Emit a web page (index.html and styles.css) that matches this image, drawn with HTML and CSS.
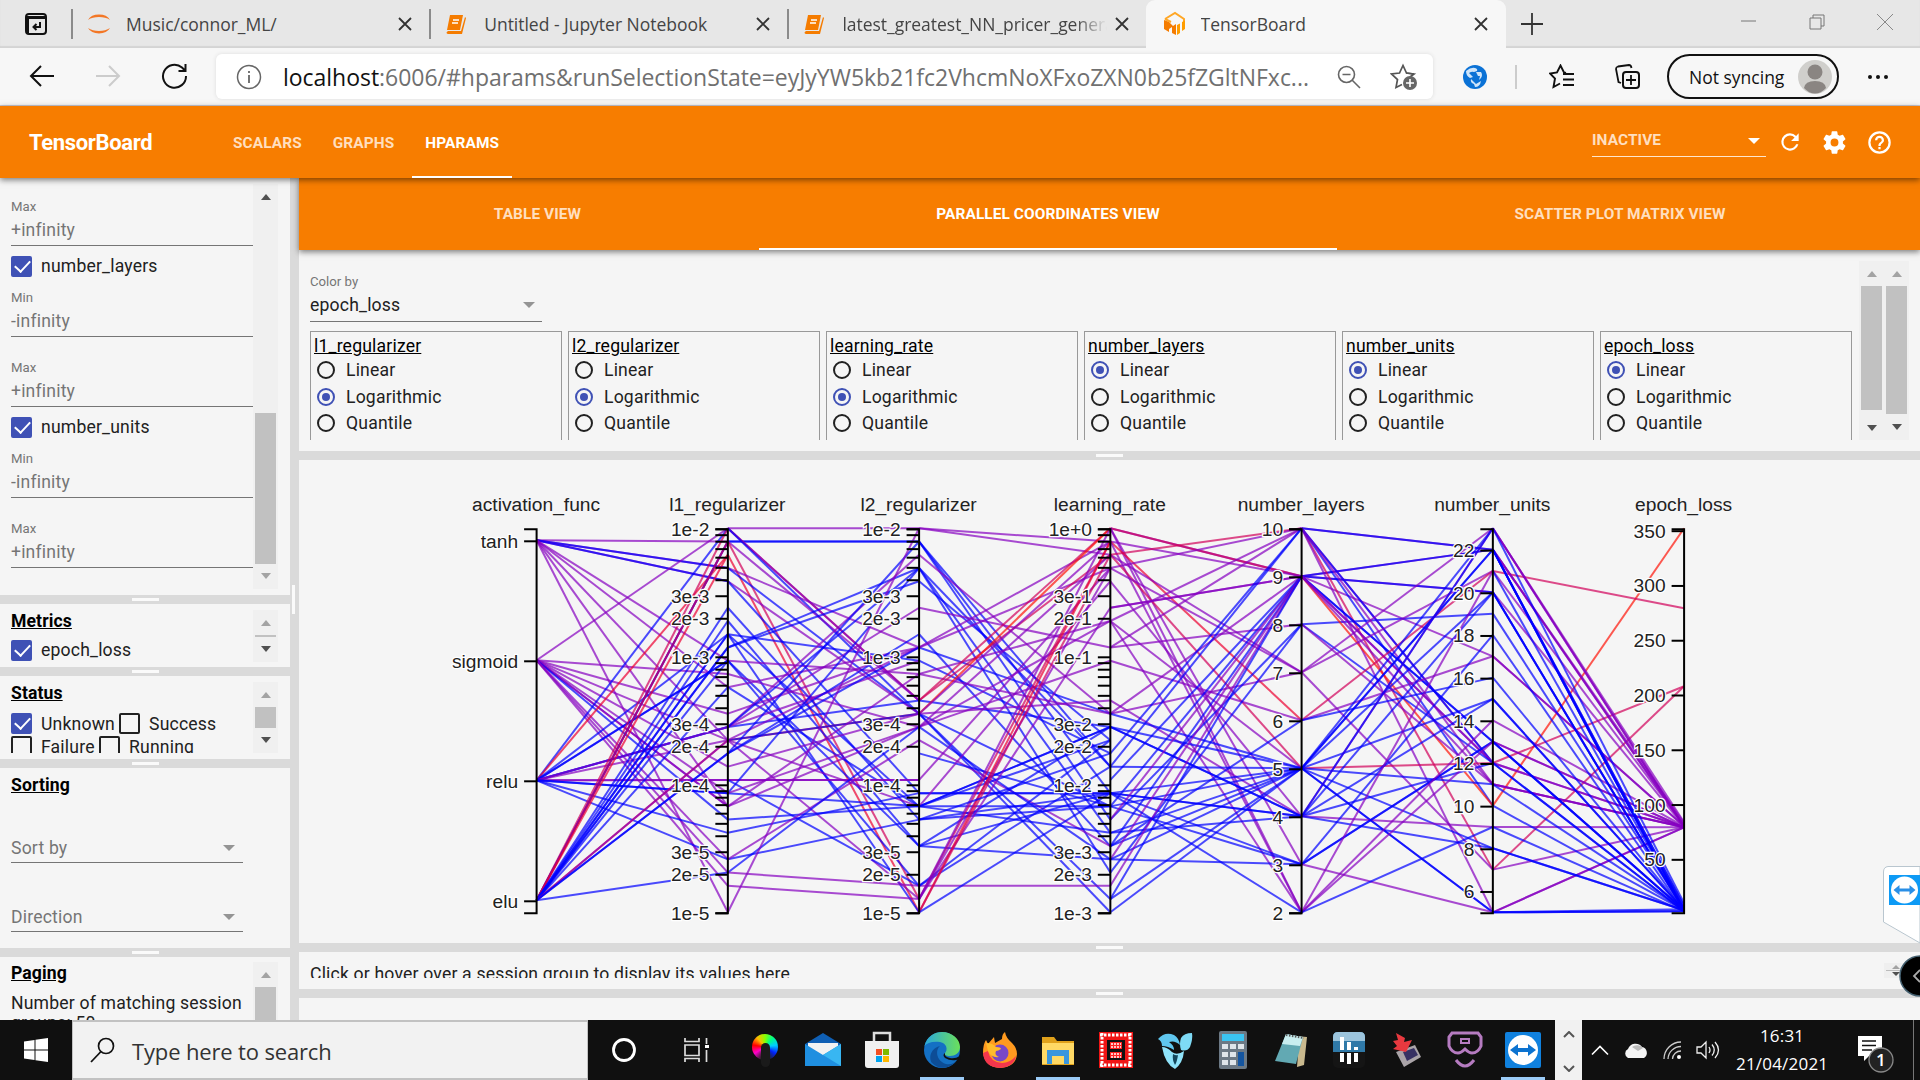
FILE: index.html
```html
<!DOCTYPE html>
<html lang="en">
<head>
<meta charset="utf-8">
<title>TensorBoard</title>
<link rel="stylesheet" href="styles.css">
</head>
<body>
<div class="tabstrip">
  <div class="tab-actions"><svg width="24" height="24" viewBox="0 0 24 24"><rect x="2" y="2" width="20" height="20" rx="3" fill="none" stroke="#111" stroke-width="2"/><path d="M2 4h20v3H2zM2 4h3v18H3z" fill="#111"/><path d="M16 10v5h-6m2.500-3l-3 3 3 3" fill="none" stroke="#111" stroke-width="2"/></svg></div>
  <div class="tab"><svg class="fav" width="26" height="26" viewBox="0 0 26 26"><path d="M2 9a12 9 0 0 1 22 0a15 9 0 0 0-22 0zM2 17a12 9 0 0 0 22 0a15 9 0 0 1-22 0z" fill="#f37726"/></svg><span class="t-name t1">Music/connor_ML/</span><svg class="x" width="14" height="14" viewBox="0 0 14 14"><path d="M1 1l12 12M13 1L1 13"/></svg></div>
  <div class="tab"><svg class="fav" width="26" height="26" viewBox="0 0 26 26"><path d="M6 4h13l-3 15H3zM4 20h13l4-14 1 1-4 16H4q-3-1 0-3z" fill="#f57c00"/><path d="M9 9h6M8 12h6" stroke="#fff" stroke-width="1.500"/></svg><span class="t-name t2">Untitled - Jupyter Notebook</span><svg class="x" width="14" height="14" viewBox="0 0 14 14"><path d="M1 1l12 12M13 1L1 13"/></svg></div>
  <div class="tab"><svg class="fav" width="26" height="26" viewBox="0 0 26 26"><path d="M6 4h13l-3 15H3zM4 20h13l4-14 1 1-4 16H4q-3-1 0-3z" fill="#f57c00"/><path d="M9 9h6M8 12h6" stroke="#fff" stroke-width="1.500"/></svg><span class="t-name fade t3">latest_greatest_NN_pricer_generator</span><svg class="x" width="14" height="14" viewBox="0 0 14 14"><path d="M1 1l12 12M13 1L1 13"/></svg></div>
  <div class="tab active"><svg class="fav" width="26" height="26" viewBox="0 0 26 26"><path d="M4 8L14 2l9 6v3M4 8l6 3" fill="none" stroke="#ffa726" stroke-width="2"/><path d="M3 9l5 2 4 4 3-2v11l-4-2v-6l-3 2v3l-5-3z" fill="#f57c00"/><path d="M16 14l3-1.500v9.500L16 24zM21 11l3-1.500V18l-3 2z" fill="#ff9d00"/></svg><span class="t-name t4">TensorBoard</span><svg class="x" width="14" height="14" viewBox="0 0 14 14"><path d="M1 1l12 12M13 1L1 13"/></svg></div>
  <svg class="plus" width="22" height="22" viewBox="0 0 22 22"><path d="M11 0v22M0 11h22" stroke="#333" stroke-width="1.800"/></svg>
  <div class="win"><svg width="15" height="16"><path d="M0 7h15" stroke="#777"/></svg><svg width="16" height="16" viewBox="0 0 16 16"><path d="M1 4h11v11H1zM4 4V1h11v11h-3" fill="none" stroke="#777"/></svg><svg width="16" height="16" viewBox="0 0 16 16"><path d="M0 0l16 16M16 0L0 16" stroke="#888"/></svg></div>
</div>
<div class="toolbar">
  <svg class="nav back" width="26" height="24" viewBox="0 0 26 24"><path d="M25 12H2M12 2L2 12l10 10" fill="none" stroke="#111" stroke-width="2"/></svg>
  <svg class="nav fwd" width="26" height="24" viewBox="0 0 26 24"><path d="M1 12h23M14 2l10 10-10 10" fill="none" stroke="#ccc" stroke-width="2"/></svg>
  <svg class="nav rel" width="28" height="28" viewBox="0 0 28 28"><path d="M25 14A11.500 11.500 0 1 1 21 5.500L24.500 9M24.500 2v7h-7" fill="none" stroke="#111" stroke-width="2"/></svg>
  <div class="address">
    <svg width="26" height="26" viewBox="0 0 26 26"><circle cx="13" cy="13" r="11.500" fill="none" stroke="#666" stroke-width="1.500"/><path d="M13 11v8M13 7v2" stroke="#666" stroke-width="1.800"/></svg>
    <div class="url"><b>localhost</b>:6006/#hparams&amp;runSelectionState=eyJyYW5kb21fc2VhcmNoXFxoZXN0b25fZGltNFxc...</div>
    <svg class="mag" width="24" height="24" viewBox="0 0 24 24"><circle cx="9.500" cy="9.500" r="8" fill="none" stroke="#666" stroke-width="1.600"/><path d="M15 15l8 8M5.500 9.500h8" stroke="#666" stroke-width="1.600"/></svg>
    <svg width="28" height="28" viewBox="0 0 28 28"><path d="M24 11l-7.500-1L13 2.500 9.500 10 1.500 11l6 5.500-1.500 8 6-3" fill="none" stroke="#555" stroke-width="1.700"/><path d="M16 10l8 1-4 3" fill="none" stroke="#555" stroke-width="1.700"/><circle cx="20" cy="20" r="7" fill="#666"/><path d="M20 16v8M16 20h8" stroke="#fff" stroke-width="1.600"/></svg>
  </div>
  <svg class="globe" width="26" height="26" viewBox="0 0 26 26"><circle cx="13" cy="13" r="12" fill="#0b72d6"/><path d="M4 7q5-4 9-3 3 1 2 3l-3 1q-2-1-5 1l4 4-3 1q-4-2-4-7zM14 8l5 0q2 3 0 6l-2 2 1-4-2 0zM9 15l5 5 5-3q-1 6-6 6l-1-3q-4-1-3-5z" fill="#cfe5fa"/></svg>
  <i class="vsep"></i>
  <svg class="fvs" width="26" height="26" viewBox="0 0 26 26"><path d="M17 9l-2-.5L11.500 1.500 8 8.500l-7 1 5 5-1.500 8.500L11 19.500" fill="none" stroke="#111" stroke-width="1.900"/><path d="M14 10h11M14 15.500h11M14 21h11" stroke="#111" stroke-width="1.900"/></svg>
  <svg class="col" width="26" height="26" viewBox="0 0 26 26"><path d="M6 19L3.500 18 1 5q0-2 2-2.500L14 1q2 0 2.500 3" fill="none" stroke="#111" stroke-width="1.800"/><rect x="8" y="8" width="16" height="16" rx="3" fill="none" stroke="#111" stroke-width="2"/><path d="M16 11v10M11 16h10" stroke="#111" stroke-width="1.800"/></svg>
  <div class="profile"><span>Not syncing</span><svg width="34" height="34" viewBox="0 0 34 34"><circle cx="17" cy="17" r="17" fill="#d0cfcc"/><circle cx="17" cy="12" r="7.500" fill="#8a8582"/><path d="M6 28q1-7 11-7t11 7q-5 5.500-11 5.500T6 28z" fill="#8a8582"/></svg></div>
  <svg class="dots" width="22" height="6"><circle cx="3" cy="3" r="2" fill="#111"/><circle cx="11" cy="3" r="2" fill="#111"/><circle cx="19" cy="3" r="2" fill="#111"/></svg>
</div>
<header class="tb-head">
  <div class="brand">TensorBoard</div>
  <nav><a>SCALARS</a><a>GRAPHS</a><a class="on">HPARAMS</a></nav>
  <div class="inactive"><span>INACTIVE</span><i class="caret"></i></div>
  <svg class="hic" width="26" height="26" viewBox="0 0 24 24"><path fill="#fff" d="M17.650 6.350A7.958 7.958 0 0 0 12 4a8 8 0 1 0 7.730 10h-2.080A6 6 0 1 1 12 6c1.660 0 3.140.69 4.220 1.780L13 11h7V4z"/></svg>
  <svg class="hic" width="27" height="27" viewBox="0 0 24 24"><path fill="#fff" d="M19.430 12.980c.04-.32.070-.64.070-.98s-.03-.66-.07-.98l2.110-1.650c.19-.15.240-.42.120-.64l-2-3.460c-.12-.22-.39-.3-.61-.22l-2.490 1c-.52-.4-1.080-.73-1.690-.98l-.38-2.650A.488.488 0 0 0 14 2h-4c-.25 0-.46.180-.49.420l-.38 2.650c-.61.250-1.170.59-1.690.98l-2.490-1c-.23-.09-.49 0-.61.220l-2 3.460c-.13.220-.07.490.12.640l2.110 1.650c-.04.320-.07.650-.07.980s.03.660.070.980l-2.110 1.650c-.19.150-.24.420-.12.640l2 3.460c.12.220.39.300.61.220l2.490-1c.52.400 1.080.730 1.690.980l.38 2.650c.03.240.24.420.49.420h4c.25 0 .46-.18.49-.42l.38-2.650c.61-.25 1.170-.59 1.690-.98l2.490 1c.23.090.49 0 .61-.22l2-3.460c.12-.22.070-.49-.12-.64zM12 15.500a3.500 3.500 0 1 1 0-7 3.500 3.500 0 0 1 0 7z"/></svg>
  <svg class="hic" width="27" height="27" viewBox="0 0 24 24"><path fill="#fff" d="M11 18h2v-2h-2zm1-16a10 10 0 1 0 0 20 10 10 0 0 0 0-20zm0 18a8 8 0 1 1 0-16 8 8 0 0 1 0 16zm0-14a4 4 0 0 0-4 4h2a2 2 0 1 1 4 0c0 2-3 1.750-3 5h2c0-2.250 3-2.500 3-5a4 4 0 0 0-4-4z"/></svg>
</header>
<div class="body">
  <aside>
    <section class="pane p-params">
      <div class="pc">
        <div class="field"><label>Max</label><div>+infinity</div></div>
        <div class="ck"><i class="box on"></i>number_layers</div>
        <div class="field"><label>Min</label><div>-infinity</div></div>
        <div class="field gap"><label>Max</label><div>+infinity</div></div>
        <div class="ck"><i class="box on"></i>number_units</div>
        <div class="field"><label>Min</label><div>-infinity</div></div>
        <div class="field gap"><label>Max</label><div>+infinity</div></div>
      </div>
      <div class="sb"><i class="up dk"></i><i class="th"></i><i class="dn"></i></div>
    </section>
    <div class="split"></div>
    <section class="pane p-metrics">
      <div class="pc"><h3>Metrics</h3><div class="ck"><i class="box on"></i>epoch_loss</div></div>
      <div class="sb"><i class="up"></i><i class="th"></i><i class="dn dk"></i></div>
    </section>
    <div class="split"></div>
    <section class="pane p-status">
      <div class="pc"><h3>Status</h3>
        <div class="ck"><i class="box on"></i><span class="w1">Unknown</span><i class="box"></i>Success</div>
        <div class="ck"><i class="box"></i><span class="w2">Failure</span><i class="box"></i>Running</div></div>
      <div class="sb"><i class="up"></i><i class="th"></i><i class="dn dk"></i></div>
    </section>
    <div class="split"></div>
    <section class="pane p-sort">
      <div class="pc"><h3>Sorting</h3>
        <div class="sel">Sort by<i class="caret"></i></div>
        <div class="sel">Direction<i class="caret"></i></div></div>
    </section>
    <div class="split"></div>
    <section class="pane p-page">
      <div class="pc"><h3>Paging</h3><p>Number of matching session groups: 50</p></div>
      <div class="sb"><i class="up"></i><i class="th"></i></div>
    </section>
  </aside>
  <div class="vsplit"><i></i></div>
  <main>
    <div class="views"><a class="v1">TABLE VIEW</a><a class="v2 on">PARALLEL COORDINATES VIEW</a><a class="v3">SCATTER PLOT MATRIX VIEW</a></div>
    <section class="config">
      <div class="cfg-main">
        <div class="colorby"><label>Color by</label><div>epoch_loss<i class="caret"></i></div></div>
        <div class="cards">
          <div class="card"><u>l1_regularizer</u><p><i></i>Linear</p><p><i class="on"></i>Logarithmic</p><p><i></i>Quantile</p></div>
          <div class="card"><u>l2_regularizer</u><p><i></i>Linear</p><p><i class="on"></i>Logarithmic</p><p><i></i>Quantile</p></div>
          <div class="card"><u>learning_rate</u><p><i></i>Linear</p><p><i class="on"></i>Logarithmic</p><p><i></i>Quantile</p></div>
          <div class="card"><u>number_layers</u><p><i class="on"></i>Linear</p><p><i></i>Logarithmic</p><p><i></i>Quantile</p></div>
          <div class="card"><u>number_units</u><p><i class="on"></i>Linear</p><p><i></i>Logarithmic</p><p><i></i>Quantile</p></div>
          <div class="card"><u>epoch_loss</u><p><i class="on"></i>Linear</p><p><i></i>Logarithmic</p><p><i></i>Quantile</p></div>
        </div>
      </div>
      <div class="sb s1"><i class="up"></i><i class="th"></i><i class="dn dk"></i></div>
      <div class="sb s2"><i class="up"></i><i class="th"></i><i class="dn dk"></i></div>
    </section>
    <div class="split"></div>
    <svg id="plot" class="plot" width="1621" height="483" viewBox="299 460 1621 483"></svg>
    <div class="split"></div>
    <section class="session"><div>Click or hover over a session group to display its values here.</div><span class="mini"><i class="up"></i><b></b><i class="dn dk"></i></span></section>
    <div class="split"></div>
  </main>
</div>
<svg class="tv-tab" width="37" height="78" viewBox="0 0 37 78"><path d="M37 .5H5Q.500 1 .500 6v50L37 77z" fill="#fff" stroke="#b9c6cf"/><rect x="6" y="9" width="31" height="30" fill="#0d9af5"/><circle cx="21.500" cy="24" r="13.500" fill="#fff"/><path d="M10.500 24l6-5v3.500h10V19l6 5-6 5v-3.500h-10V29z" fill="#2a8fe6"/></svg>
<svg class="knob" width="21" height="42" viewBox="0 0 21 42"><circle cx="21" cy="21" r="20" fill="#000" stroke="#446070" stroke-width="1.500"/><path d="M21 15l-6 6 6 6" fill="none" stroke="#aaa" stroke-width="1.800"/></svg>
<footer class="taskbar">
  <div class="start"><svg width="24" height="24" viewBox="0 0 24 24"><path d="M0 3.500l10.500-1.500v9.500H0zM11.500 1.800L24 0v11.500H11.500zM0 12.500h10.500V22L0 20.500zM11.500 12.500H24V24l-12.500-1.800z" fill="#fff"/></svg></div>
  <div class="search"><svg width="26" height="26" viewBox="0 0 26 26"><circle cx="16" cy="9" r="7.500" fill="none" stroke="#111" stroke-width="1.700"/><path d="M11 14.500L1 25" stroke="#111" stroke-width="1.800"/></svg><span>Type here to search</span></div>
  <div class="cell c1"><svg width="26" height="26"><circle cx="13" cy="13" r="10.500" fill="none" stroke="#fff" stroke-width="2.800"/></svg></div>
  <div class="cell c2"><svg width="25" height="24" viewBox="0 0 25 24"><path d="M1 0v3.500h14V0M1 7h14v10.500H1zM1 24v-3.500h14V24M22.500 0v6M22.500 12v12" fill="none" stroke="#ddd" stroke-width="1.700"/><path d="M21 7h4v3h-4z" fill="#fff"/></svg></div>
  <div class="cell"><div class="wheel"></div></div>
  <div class="cell"><svg width="38" height="36" viewBox="0 0 38 36"><path d="M1 12L19 1l18 11v22H1z" fill="#0f5fb4"/><path d="M4 11h30v12H4z" fill="#f2f2f2"/><path d="M1 12l18 11-18 11zM37 12v22H1z" fill="#1f8fe0"/><path d="M37 12v22L19 23z" fill="#38b6f2"/></svg></div>
  <div class="cell"><svg width="36" height="38" viewBox="0 0 36 38"><path d="M10 12V2h16v10" fill="none" stroke="#ddd" stroke-width="2.500"/><path d="M1 10h34v24q0 3-3 3H4q-3 0-3-3z" fill="#f0f0f0"/><path d="M12 18h6v6h-6z" fill="#f25022"/><path d="M19 18h6v6h-6z" fill="#7fba00"/><path d="M12 25h6v6h-6z" fill="#00a4ef"/><path d="M19 25h6v6h-6z" fill="#ffb900"/></svg></div>
  <div class="cell run edgeapp"><svg width="38" height="38" viewBox="0 0 38 38"><defs><linearGradient id="eg" x1="0" x2="1"><stop offset="0" stop-color="#2aa7dd"/><stop offset="1" stop-color="#6be05a"/></linearGradient></defs><circle cx="19" cy="19" r="18" fill="#1470c4"/><path d="M1.500 15C4 5 12 1 19 1c10 0 18 7 18 15 0 6-5 9-10 9-4 0-6-1-5-3 3-3 2-10-5-11C9 10 4 12 1.500 15z" fill="url(#eg)"/><path d="M17 15c-5 4-4 15 6 18 5 1 9-1 11-4-5 8-18 11-25 3-4-5-1-15 8-17z" fill="#0d4d96"/><path d="M22 22q-1 4 5 5 5 1 10-2l1 3-5 1q-6 1-11-2-3-3 0-5z" fill="#101010"/></svg></div>
  <div class="cell n"><svg width="36" height="38" viewBox="0 0 36 38"><path d="M4 9l2 4 6-7 1 6 7-4q0-5 3-7 1 6 7 11 5 5 5 11-1 13-17 14Q3 36 1 22 1 13 4 9z" fill="#ff9a1f"/><path d="M1 22q1 14 17 15 14-1 16-12-6 7-14 7Q8 31 6 20z" fill="#f4364c"/><circle cx="18" cy="22" r="8.500" fill="#7848c8"/><path d="M4 12q7 0 10 4 5 0 5 2-3 2-5 2-2 4 3 6-8 1-11-6z" fill="#ffbc2c"/></svg></div>
  <div class="cell run n"><svg width="34" height="32" viewBox="0 0 34 32"><path d="M1 3h12l3 4h17v24H1z" fill="#e0a11b"/><path d="M1 9h32v21H1z" fill="#ffd965"/><path d="M6 30V16h22v14h-5v-8H11v8z" fill="#3a96dd"/></svg></div>
  <div class="cell n"><svg width="34" height="36" viewBox="0 0 34 36"><rect width="34" height="36" fill="#f01515"/><path d="M1 3h32M1 33h32M3 1v34M31 1v34" stroke="#fff" stroke-width="3" stroke-dasharray="2.500 1.500"/><path d="M8 8h18v20H8z" fill="#111"/><path d="M11 10h12v7H11zM11 20h12v6H11z" fill="#f22"/><path d="M12 12h10M12 15h10M12 22h10M12 25h10" stroke="#fff" stroke-width="1.500" stroke-dasharray="2 1"/></svg></div>
  <div class="cell n"><svg width="36" height="38" viewBox="0 0 36 38"><path d="M1 8Q8 0 17 4q5 3 6 10-5-5-11-3 5 3 5 8-6-4-12-4 0-5-4-7z" fill="#5fc6ee"/><path d="M35 2q-8 0-11 5-2 6 0 12 6 2 9-3 3-8 2-14z" fill="#7edaf5"/><path d="M5 16q5 0 10 5 5 4 12-1-1 12-9 18-10-5-13-22z" fill="#8fe3fa"/><path d="M16 23q3 2 5 1-1 7-3 10-3-5-2-11z" fill="#13475c"/></svg></div>
  <div class="cell n"><svg width="28" height="38" viewBox="0 0 28 38"><rect width="28" height="38" rx="2" fill="#6c7985"/><path d="M3 3h22v7H3z" fill="#3bc4f2"/><path d="M3 13h6v5H3zM11 13h6v5h-6zM19 13h6v5h-6zM3 21h6v5H3zM11 21h6v5h-6zM3 29h6v5H3zM11 29h6v5h-6z" fill="#dfe5ea"/><path d="M19 21h6v14h-6z" fill="#1455a0"/></svg></div>
  <div class="cell n"><svg width="34" height="36" viewBox="0 0 34 36"><path d="M11 3l22 2-3 28-7 2 2-26z" fill="#c9b98e"/><path d="M12 2l17 3-7 27L1 29z" fill="#62a9b3"/><path d="M12 2l17 3-3 9-18-2z" fill="#c9eef0"/><path d="M12 3l18 3" stroke="#555" stroke-width="2" stroke-dasharray="1.500 1.500"/></svg></div>
  <div class="cell n"><svg width="32" height="36" viewBox="0 0 32 36"><rect width="32" height="36" rx="5" fill="#151515"/><path d="M0 20V5q0-5 5-5h22q5 0 5 5v15z" fill="#2f79a8"/><path d="M0 9V5q0-5 5-5h22q5 0 5 5v4z" fill="#9cc4dc"/><path d="M9 5v13M16 10v8M23 15v3M9 21v9M16 21v11M23 21v9" stroke="#fff" stroke-width="4"/></svg></div>
  <div class="cell n"><svg width="34" height="36" viewBox="0 0 34 36"><path d="M6 20l19-7 6 12-17 10z" fill="#aaa4a8"/><path d="M13 20l11-4 4 7-11 6z" fill="#373163"/><path d="M6 1l9 5-1 4 8-2-6 12-13-3 4-3-4-5 5-1z" fill="#e8393f"/></svg></div>
  <div class="cell n"><svg width="36" height="38" viewBox="0 0 36 38"><path d="M5 2h26l3 4v9q-3 7-9 7-3 0-7-4-4 4-7 4-6 0-9-7V6z" fill="none" stroke="#b57bc0" stroke-width="3"/><path d="M14 12V8h8v4z" fill="none" stroke="#b57bc0" stroke-width="2"/><path d="M9 29q9 12 18 0" fill="none" stroke="#b57bc0" stroke-width="3"/></svg></div>
  <div class="cell run n"><svg width="36" height="36" viewBox="0 0 36 36"><rect width="36" height="36" rx="2" fill="#1081de"/><circle cx="18" cy="18" r="15" fill="#fff"/><path d="M5 18l8-6v4h10v-4l8 6-8 6v-4H13v4z" fill="#0c73d0"/></svg></div>
  <div class="tscroll"><svg width="12" height="7"><path d="M1 6l5-5 5 5" fill="none" stroke="#555" stroke-width="2"/></svg><svg width="12" height="7"><path d="M1 1l5 5 5-5" fill="none" stroke="#555" stroke-width="2"/></svg></div>
  <svg class="tr1" width="18" height="12"><path d="M1 10.500l8-8 8 8" fill="none" stroke="#fff" stroke-width="1.600"/></svg>
  <svg class="tr2" width="26" height="18" viewBox="0 0 26 18"><path d="M5 17a5 5 0 0 1 0-9 8 8 0 0 1 14-2 6 6 0 0 1 2 11z" fill="#f4f4f4"/><path d="M9 6a7 6 0 0 1 11 1l-5 3z" fill="#bbb"/></svg>
  <svg class="tr3" width="22" height="20" viewBox="0 0 22 20"><path d="M2 19A17 17 0 0 1 19 2M6 19A13 13 0 0 1 19 6.500M10.500 19A8.500 8.500 0 0 1 19 11" fill="none" stroke="#ccc" stroke-width="1.300"/><circle cx="17" cy="17" r="2" fill="#fff"/></svg>
  <svg class="tr4" width="24" height="20" viewBox="0 0 24 20"><path d="M1 7h4l5-5v16l-5-5H1zM13 7q2 3 0 6M16 4.500q4.500 5.500 0 11M19 2q7 8 0 16" fill="none" stroke="#eee" stroke-width="1.300"/></svg>
  <div class="clock"><span>16:31</span><span>21/04/2021</span></div>
  <svg class="note" width="38" height="38" viewBox="0 0 38 38"><path d="M1 1h24v20H12l-5 5v-5H1z" fill="#fff"/><path d="M5 6h14M5 10.500h14M5 15h10" stroke="#111" stroke-width="1.500"/><circle cx="24" cy="25" r="12" fill="#222" stroke="#888" stroke-width="1.300"/><text x="24" y="31" text-anchor="middle" font-size="17" font-weight="600" fill="#fff" font-family="Open Sans, sans-serif">1</text></svg>
  <i class="edge"></i>
</footer>
<script src="plot.js"></script>
</body>
</html>
```
FILE: styles.css
```css
*{box-sizing:border-box}
body{margin:0;width:1920px;height:1080px;overflow:hidden;display:flex;flex-direction:column;background:#f5f5f5;font:17.6px/20px Roboto,sans-serif;letter-spacing:.18px;color:#212121}
svg{display:block;flex:none}
p,h3{margin:0}
.tabstrip{height:48px;flex:none;background:#e7e7e7;display:flex;align-items:center;box-shadow:inset 0 -2px 1px #d4d4d4;font:17.5px "Open Sans",sans-serif;letter-spacing:-.02px;color:#444}
.tab-actions{width:71px;padding-left:24px}
.tab{width:358.200px;height:30px;border-left:2px solid #8b8b8b;display:flex;align-items:center;padding:0 17px 0 13px}
.tab .t-name{flex:1;margin:0 8px 0 14px;white-space:nowrap;overflow:hidden}
.fade{-webkit-mask-image:linear-gradient(90deg,#000 88%,transparent)}
.x path{stroke:#333;stroke-width:1.800}
.tab.active{height:48px;background:#f7f7f7;border:0;border-radius:9px 9px 0 0;width:360px;padding-left:15px;padding-right:18px}
.plus{margin-left:15px}
.win{margin-left:auto;width:152px;margin-right:27px;display:flex;justify-content:space-between;padding-bottom:4px}
.toolbar{height:58px;flex:none;background:#f7f7f7;border-bottom:1px solid #c9c9d4;display:flex;align-items:center}
.back{margin-left:29px}.fwd{margin-left:40px}.rel{margin-left:40px}
.nav{margin-bottom:1px}
.address{margin-left:27px;width:1217px;height:45px;background:#fff;border-radius:6px;box-shadow:0 0 4px #ddd;display:flex;align-items:center;padding:0 15px 0 20px}
.url{font:23px "Open Sans",sans-serif;letter-spacing:-.03px;color:#707070;margin-left:21px;width:1040px;white-space:nowrap}
.url b{font-weight:400;color:#111}
.mag{margin:0 0 0 14px}
.address svg:last-child{margin-left:auto}
.globe{margin-left:29px}
.vsep{width:2px;height:24px;background:#ccc;margin-left:27px}
.fvs{margin-left:32px}.col{margin-left:40px}
.profile{margin-left:26px;width:172px;height:45px;border:2px solid #111;border-radius:23px;display:flex;align-items:center;justify-content:space-between;padding:0 5px 0 20px;font:17.500px "Open Sans",sans-serif;letter-spacing:0;color:#111;white-space:nowrap}
.dots{margin-left:28px}
.tb-head{height:72px;flex:none;background:#f77d00;color:#fff;display:flex;align-items:center;position:relative;z-index:2;box-shadow:0 2px 6px rgba(0,0,0,.5);font-weight:700;letter-spacing:0}
.brand{font-size:22px;letter-spacing:-.35px;width:220px;padding-left:29px;padding-top:1px}
.tb-head nav{display:flex;height:72px}
.tb-head nav a{font-size:15.400px;letter-spacing:.1px;line-height:74px;padding:0 13px;color:#ffdfbf;height:72px}
.tb-head nav a+a{margin-left:5px}
.tb-head nav .on{color:#fff;border-bottom:2px solid #fff}
.inactive{margin-left:auto;width:174px;height:31px;border-bottom:1.500px solid #ffe6cc;font-size:15.400px;letter-spacing:.1px;line-height:29px;color:#ffdfbf;display:flex;justify-content:space-between;align-items:center;padding-right:6px;margin-bottom:2px}
.caret{border:6px solid transparent;border-top-color:#949494;border-bottom:0;width:0;height:0}
.inactive .caret{border-top-color:#fff}
.hic{margin-left:18px}
.inactive+.hic{margin-left:11px}
.hic:last-child{margin-right:27px}
.body{height:842px;flex:none;display:flex;overflow:hidden}
aside{width:290px;flex:none}
.split{height:9px;background:#dadada;display:flex;justify-content:center;align-items:center}
.split::after{content:"";width:27px;height:3px;background:#fafafa}
.vsplit{width:9px;flex:none;background:#dadada;display:flex;align-items:center;padding-left:2px}
.vsplit i{width:3px;height:29px;background:#fafafa}
.pane{display:flex;overflow:hidden}
.pc{width:242px;margin-left:11px;flex:none;overflow:hidden}
.sb{width:25px;background:#f0f0f0;display:flex;flex-direction:column;align-items:center;flex:none}
.up,.dn{border:5.500px solid transparent;width:0;height:0;flex:none}
.up{border-bottom:6px solid #a3a3a3;border-top:0;margin-top:10px}
.up.dk{border-bottom-color:#505050}
.dn{border-top:6px solid #a3a3a3;border-bottom:0}
.dn.dk{border-top-color:#505050}
.th{width:21px;background:#c1c1c1;margin:9px 0;flex:none}
.p-params{height:417px}
.p-params .pc{padding-top:20px}
.p-params .sb{margin:6px 0}
.p-params .th{height:151px;margin-top:213px}
.field{height:48px;border-bottom:1px solid #757575;color:#757575}
.field label{display:block;font-size:13.200px;line-height:17px;letter-spacing:0}
.field div{line-height:31px}
.gap{margin-top:22px}
.ck{height:40px;display:flex;align-items:center}
.p-params .ck{margin-bottom:3px}
.box{width:21px;height:21px;border:2px solid #212121;border-radius:2px;margin-right:9px;flex:none}
.box.on{background:#3f51b5;border-color:#3f51b5;display:flex;align-items:center;justify-content:center}
.box.on::after{content:"";width:7px;height:13px;border:solid #fff;border-width:0 2.200px 2.200px 0;transform:translate(1px,-2px) rotate(43deg)}
h3{font-size:17.600px;line-height:24px;font-weight:700;letter-spacing:.1px;color:#000;text-decoration:underline}
.p-metrics{height:63px}.p-metrics .pc{padding-top:5px}.p-metrics .ck{height:34px}
.p-metrics .sb{height:52px;margin-top:6px}.p-metrics .th{height:2px}
.p-status{height:83px}.p-status .pc{padding-top:5px;height:77px}
.p-status .ck{height:23px}.p-status h3{margin-bottom:7px}
.p-status .sb{height:71px;margin-top:6px}.p-status .th{height:21px}
.w1{width:78px}.w2{width:58px}
.p-sort{height:180px}.p-sort .pc{padding-top:5px}
.sel{width:232px;height:30px;border-bottom:1px solid #757575;color:#757575;display:flex;align-items:center;justify-content:space-between;padding-right:8px;margin-top:39px}
h3+.sel{margin-top:36px}
.p-page{height:63px}.p-page .pc{padding:4px 0 0 0}.p-page p{line-height:20px;margin-top:8px}
.p-page .sb{margin-top:5px}.p-page .th{height:60px}
main{width:1621px;flex:none}
.views{height:72px;background:#f77d00;display:flex;padding:0 17px;font-weight:700;font-size:15.400px;letter-spacing:.1px;line-height:73px;text-align:center;color:#ffdfbf;box-shadow:0 2px 6px rgba(0,0,0,.5);position:relative}
.v1{width:443px}.v2{width:578px}.v3{width:566px}
.views .on{color:#fff;border-bottom:2px solid #fff}
.config{height:201px;display:flex;padding-top:11px}
.cfg-main{width:1560px;height:179px;padding:12px 0 0 11px;overflow:hidden;flex:none}
.colorby{width:232px;height:49px;border-bottom:1px solid #757575}
.colorby label{display:block;font-size:13.200px;line-height:18px;letter-spacing:0;color:#757575}
.colorby div{display:flex;align-items:center;justify-content:space-between;padding-right:7px;height:28px}
.cards{display:flex;gap:6px;margin-top:9px}
.card{width:252px;height:140px;flex:none;border:1px solid #999;padding:3px 3px}
.card u{display:block;line-height:22px;color:#000}
.card p{height:26.500px;display:flex;align-items:center;line-height:24px}
.card p i{width:18px;height:18px;border:2px solid #212121;border-radius:50%;margin:0 11px 0 3px;display:flex}
.card p i.on{border-color:#3f51b5;padding:3px}
.card p i.on::after{content:"";flex:1;border-radius:50%;background:#3f51b5}
.config .sb{height:179px}
.s1 .th{height:124px;margin-bottom:15px}
.s2 .th{height:128px;margin-bottom:10px}
.plot{font-family:"Liberation Sans",sans-serif;font-size:19.200px;letter-spacing:0}
.plot .lab{fill:#222;paint-order:stroke;stroke:#fff;stroke-width:2.500px}
.plot .ttl{fill:#222}
.session{height:37px;padding:11px 0 0 11px;display:flex}
.session div{height:15px;width:1574px;overflow:hidden;line-height:22px}
.mini{display:flex;flex-direction:column;align-items:center;width:24px;height:15px;background:#efefef}
.mini .up{margin-top:2px}.mini b{height:1px;width:20px;background:#bbb;margin:1px 0}
.mini .up,.mini .dn{border-width:4px}.mini .up{border-top:0}.mini .dn{border-bottom:0}
.tv-tab{position:absolute;left:1883px;top:866px}
.knob{position:absolute;left:1899px;top:955px}
.taskbar{height:60px;flex:none;background:#101010;display:flex;align-items:center;position:relative;color:#fff}
.start{width:72px;padding-left:24px}
.search{width:516px;height:60px;background:#f2f2f2;border:2px solid #c2c2c2;border-right-width:1px;border-left-width:1px;display:flex;align-items:center;padding-left:17px;color:#333;font:22px "Open Sans",sans-serif;letter-spacing:-.15px}
.search span{margin:2px 0 0 16px}
.cell{width:58.300px;height:60px;display:flex;align-items:center;justify-content:center;flex:none}
.cell.n{width:58.100px}
.edgeapp{margin-left:2px}
.c1{width:72px}.c2{width:76px;padding-right:4px}
.run{background:linear-gradient(#9bcbf7,#9bcbf7) center bottom/44px 3px no-repeat}
.wheel{width:26px;height:26px;border-radius:50%;background:conic-gradient(#8f0,#0f8,#0cf,#02f,#222 45%,#222 55%,#f0c,#f00,#fb0,#8f0);display:flex;margin-bottom:6px}
.wheel::after{content:"";width:9px;height:24px;border-radius:5px;background:#1a1a1a;margin:9px auto 0}
.tscroll{width:27px;height:60px;background:#f1f1f1;display:flex;flex-direction:column;justify-content:space-between;align-items:center;padding:11px 0 8px;margin-left:3px}
.tr1{margin-left:9px}.tr2{margin-left:14px}.tr3{margin-left:13px}.tr4{margin-left:12px}
.clock{margin-left:6px;width:112px;display:flex;flex-direction:column;align-items:center;font:17px/28px "Open Sans",sans-serif;letter-spacing:.2px}
.note{margin-left:19px;margin-top:8px}
.edge{width:1px;height:60px;background:#777;margin-left:auto;margin-right:6px}
```
FILE: plot.js
```javascript
const NS = 'http://www.w3.org/2000/svg';
const svg = document.getElementById('plot');
const el = (name, attrs, text) => {
  const e = document.createElementNS(NS, name);
  for (const k in attrs) e.setAttribute(k, attrs[k]);
  if (text) e.textContent = text;
  svg.appendChild(e);
};
const TOP = 529.3, H = 384;
const axisX = i => 536.6 + 191.25 * i;
const colors = { b: '#00f', p: '#8600c0', k: '#d2005a', r: '#ec0030', o: '#ff1408' };

const cat = { t: 12, s: 132, r: 252, e: 372 };
const log = k => k * H / 29;
const layer = n => (10 - n) * 48;
const unit = n => (23 - n) * H / 18;
const scales = [k => cat[k], log, log, log, layer, unit, v => Number(v)];

// Each entry reads from>to followed by one letter per line drawn.
const gaps = [
  't>1p t>3pb t>4pb t>10p t>12p t>16p t>21p t>29p s>0p s>11p s>14p s>16p s>18p s>20p s>21pp s>22b s>25p s>26p s>27p r>0b r>2r r>10bb r>8b r>15bbp r>16p r>19pp r>20bb r>23b r>25b e>0k e>1pb e>1k e>2r e>6b e>7b e>8bb e>9bb e>10b e>12b e>16rp e>17bb e>26b',
  '0>0p 1>1bb 0>13kp 0>14b 1>13p 1>28k 2>29r 3>9p 3>14b 4>14p 4>20b 6>22b 7>24b 8>10b 8>21b 8>29b 9>3b 9>4b 10>11p 10>27b 10>24b 11>15p 12>9p 12>21b 14>9p 15>6p 15>2p 15>13b 15>10p 16>14o 16>14b 16>9p 16>21p 16>28p 17>1b 17>8b 17>9b 15>3b 18>14p 19>19pp 19>27b 20>21b 20>3b 20>15p 21>11p 21>15p 22>21b 23>20b 25>22b 25>16p 26>15b 26>27p 27>28p 29>0p',
  '0>1p 0>2p 1>18b 1>20b 1>22b 2>14p 3>23b 3>18b 3>26b 4>16b 6>9p 8>24b 9>14b 9>3p 9>1p 10>17b 11>7p 11>14p 13>0k 13>2k 13>15b 14>0o 14>1p 14>21b 14>29b 14>28b 15>7p 15>10p 15>2p 16>24p 14>13p 15>25b 17>21b 19>3p 20>20bb 21>15bb 21>4p 21>21b 21>16b 21>23b 22>20b 22>21b 24>25b 24>20b 24>15b 27>27p 27>16b 27>18b 28>1k 28>3p 28>6p 28>0p 29>1r 29>2k 29>20b 22>17b',
  '0>9pk 0>3p 0>2p 1>9p 1>6r 1>2p 2>5k 2>7p 2>10k 3>10p 3>7p 4>4p 6>9pp 7>10p 7>5p 9>8p 9>10p 7>2p 10>6p 13>4p 14>7p 14>9p 14>5b 15>4bb 15>5b 17>10b 18>5b 18>10b 19>9b 20>5b 20>4bb 20>3b 21>9b 21>3b 21>5b 22>8b 22>9p 23>4b 23>5b 24>9b 24>6b 24>5b 25>3b 25>9p 25>5b 26>8b 27>9p 28>5b 29>5b 20>2b 28>9b',
  '10>22pb 9>22pb 9>20pb 9>17p 8>19b 10>12p 10>7k 10>5p 10>12b 10>10b 10>11p 9>10o 9>13bb 9>12pp 9>11p 8>12b 8>11p 7>23p 7>21p 7>7p 6>21k 6>17p 6>16b 5>23b 5>12k 5>22bb 5>20b 5>15b 5>11b 5>8b 5>5bb 4>23pb 4>20b 4>15b 4>12b 4>9p 4>8b 3>13bb 3>18b 3>5p 2>14p 2>13p 2>21p 2>9b',
  '10>0o 21>80k 12>158k 7>158k 23>298pp 23>294p 22>298pp 22>295p 21>297p 20>298p 17>298pp 14>298p 13>299pp 12>299pp 11>299ppp 9>299p 7>299p 5>299pp 23>375b 22>382bbb 22>378bb 21>381b 20>382bbb 19>381b 18>383b 16>382b 15>382bb 13>382bbb 12>383bb 11>382b 10>382b 9>383b 8>382bb 5>381b 5>383bb'
];
gaps.forEach((g, i) => g.split(' ').forEach(item => {
  const [, a, b, cs] = item.match(/^(\w+)>(\d+)([a-z]+)$/);
  for (const c of cs) {
    el('line', {
      x1: axisX(i), y1: TOP - 1 + scales[i](a), x2: axisX(i + 1), y2: TOP - 1 + scales[i + 1](b),
      stroke: colors[c], 'stroke-width': 2, 'stroke-opacity': .7
    });
  }
}));

const logTicks = top => {
  const out = [];
  for (let d = 0; d < 3; d++) {
    for (let m = 10; m > 1; m--) {
      const e = top - d - 1, exp = m === 10 ? e + 1 : e;
      const show = m === 10 || m === 3 || m === 2;
      out.push([(d + 1 - Math.log10(m)) * 128, show ? (m === 10 ? 1 : m) + 'e' + (exp < 0 ? exp : '+' + exp) : '']);
    }
  }
  out.push([H, '1e' + (top - 3)]);
  return out;
};
const range = (from, to, step, pos) => {
  const out = [];
  for (let v = from; v <= to; v += step) out.push([pos(v), String(v)]);
  return out;
};
const axes = [
  ['activation_func', [[12, 'tanh'], [132, 'sigmoid'], [252, 'relu'], [372, 'elu']]],
  ['l1_regularizer', logTicks(-2)],
  ['l2_regularizer', logTicks(-2)],
  ['learning_rate', logTicks(0)],
  ['number_layers', range(2, 10, 1, layer)],
  ['number_units', range(6, 22, 2, unit)],
  ['epoch_loss', range(50, 350, 50, v => 385.300 - v * 1.0955)]
];
axes.forEach(([name, ticks], i) => {
  const x = axisX(i);
  el('path', { d: `M${x - 12.500} ${TOP}H${x}V${TOP + H}H${x - 12.500}`, fill: 'none', stroke: '#000', 'stroke-width': 2 });
  ticks.forEach(([y, label]) => {
    el('path', { d: `M${x - 12.500} ${TOP + y}H${x}`, stroke: '#000', 'stroke-width': 2 });
    if (label) el('text', { x: x - 18.500, y: TOP + y + 6.500, 'text-anchor': 'end', class: 'lab' }, label);
  });
  el('text', { x: x - .5, y: 511, 'text-anchor': 'middle', class: 'ttl' }, name);
});
```
